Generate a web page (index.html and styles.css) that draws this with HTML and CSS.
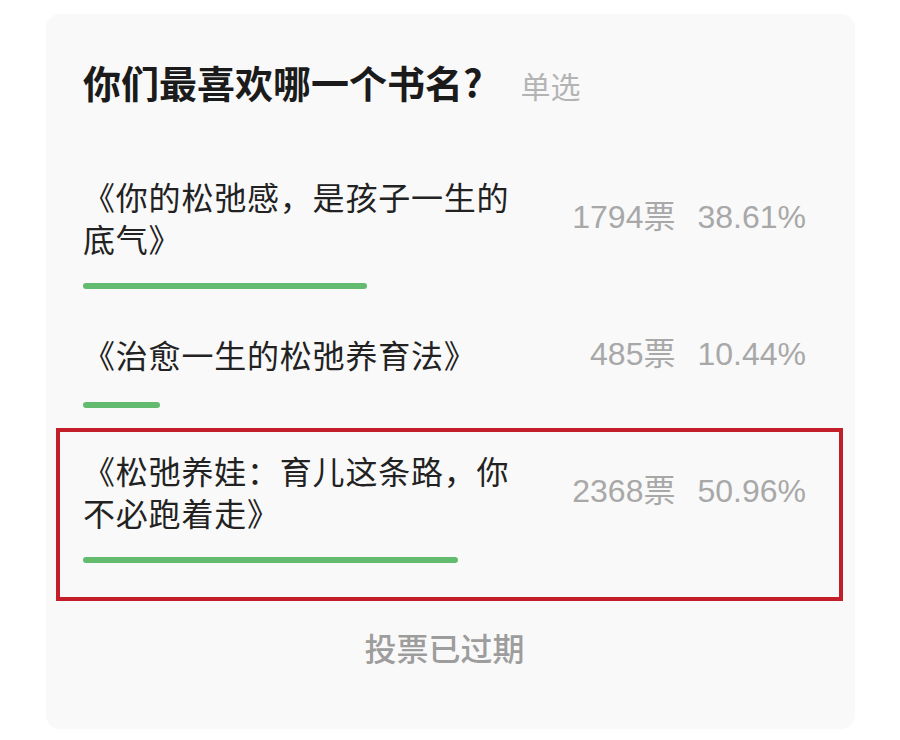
FILE: index.html
```html
<!DOCTYPE html>
<html lang="zh-CN">
<head>
    <meta charset="UTF-8">
    <meta name="viewport" content="width=device-width, initial-scale=1.0">
    <title>投票</title>
    <link rel="stylesheet" href="styles.css">
</head>
<body>
    <div class="poll">
        <h1 class="poll-title">你们最喜欢哪一个书名?<span class="poll-type">单选</span></h1>

        <div class="option">
            <div class="option-row">
                <div class="option-text">《你的松弛感，是孩子一生的底气》</div>
                <div class="option-stats"><span>1794票</span><span>38.61%</span></div>
            </div>
            <div class="bar-track"><div class="bar" style="width: 38.61%"></div></div>
        </div>

        <div class="option">
            <div class="option-row">
                <div class="option-text">《治愈一生的松弛养育法》</div>
                <div class="option-stats"><span>485票</span><span>10.44%</span></div>
            </div>
            <div class="bar-track"><div class="bar" style="width: 10.44%"></div></div>
        </div>

        <div class="option marked">
            <div class="option-row">
                <div class="option-text">《松弛养娃：育儿这条路，你不必跑着走》</div>
                <div class="option-stats"><span>2368票</span><span>50.96%</span></div>
            </div>
            <div class="bar-track"><div class="bar" style="width: 50.96%"></div></div>
        </div>

        <p class="poll-footer">投票已过期</p>
    </div>
</body>
</html>
```

FILE: styles.css
```css
body {
    margin: 0;
    padding: 14px 0 0 46px;
    background: #fff;
    font-family: "Noto Sans CJK SC", "Liberation Sans", sans-serif;
}
.poll {
    width: 809px;
    box-sizing: border-box;
    padding: 43px 49px 60px 37px;
    background: #f9f9f9;
    border-radius: 14px;
}
.poll-title {
    margin: 0 0 65px;
    font-size: 38px;
    line-height: 50px;
    font-weight: bold;
    color: #1b1b1b;
}
.poll-type {
    margin-left: 38px;
    font-size: 30px;
    font-weight: normal;
    color: #b4b4b4;
}
.option {
    margin-bottom: 41px;
}
.option.marked {
    position: relative;
}
.option.marked::after {
    content: "";
    position: absolute;
    top: -21px;
    left: -27px;
    right: -37px;
    bottom: -38px;
    border: 4px solid #c41e2a;
}
.option-row {
    display: flex;
    align-items: center;
    min-height: 48px;
}
.option-text {
    width: 430px;
    font-size: 32px;
    line-height: 42px;
    letter-spacing: 0.8px;
    color: #222;
}
.option-stats {
    margin-left: auto;
    display: flex;
    align-items: baseline;
    gap: 22px;
    font-family: "Liberation Sans", "Noto Sans CJK SC", sans-serif;
    font-size: 32px;
    line-height: 40px;
    color: #a8a8a8;
}
.bar-track {
    margin: 24px -12px 0 0;
}
.bar {
    height: 6px;
    border-radius: 3px;
    background: #62bb6e;
}
.poll-footer {
    margin: 62px 0 0;
    text-align: center;
    font-size: 32px;
    line-height: 44px;
    font-weight: 500;
    color: #9d9d9d;
}
```
